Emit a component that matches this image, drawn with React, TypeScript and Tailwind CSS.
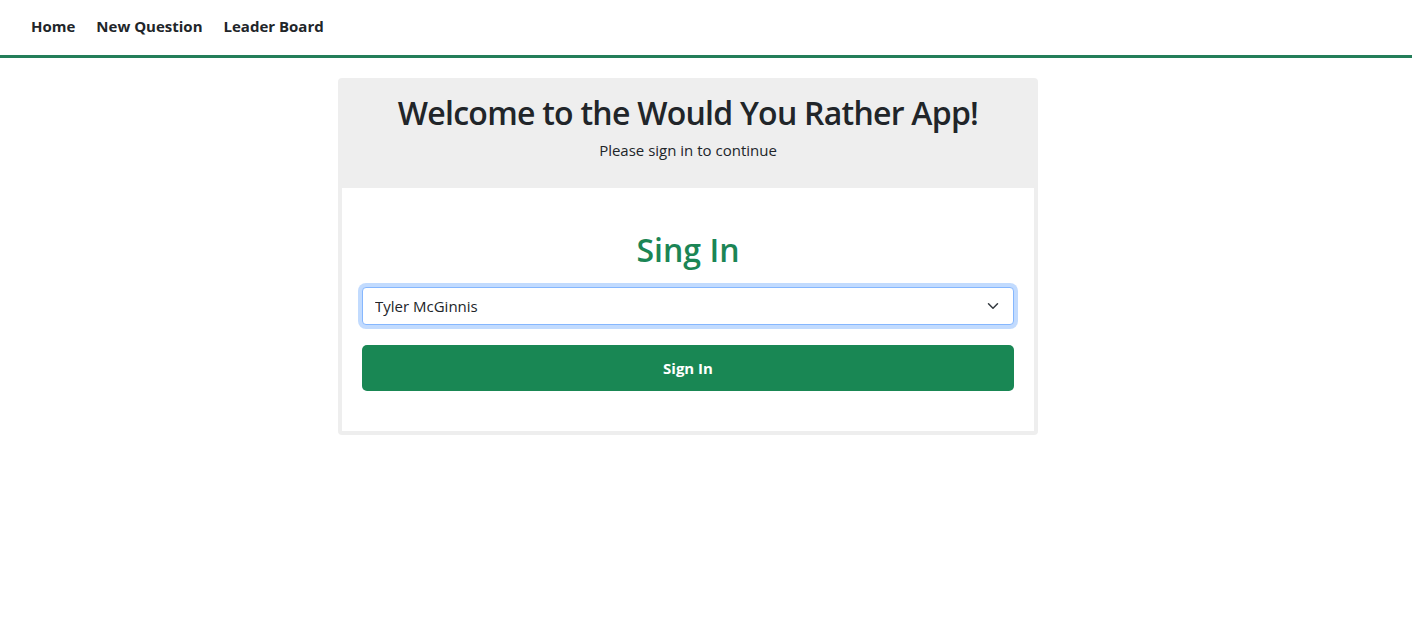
import React from "react";

const App = () => {
  return (
    <div className="min-h-screen bg-white text-[#212529] font-['Open_Sans',sans-serif]">
      <nav className="flex items-center h-[58px] pb-[3px] px-[31px] gap-[21px] border-b-[3px] border-[#237e59]">
        <a className="text-[15px] font-bold text-[#212529]">Home</a>
        <a className="text-[15px] font-bold text-[#212529]">New Question</a>
        <a className="text-[15px] font-bold text-[#212529]">Leader Board</a>
      </nav>
      <div className="flex justify-center pt-[20px] pr-[36px]">
        <div className="w-[700px] bg-[#eeeeee] rounded-[4px] px-[4px] pb-[4px]">
          <div className="flex flex-col items-center h-[110px] pt-[12px]">
            <h1 className="text-[32px] leading-[46px] font-semibold tracking-[-0.75px]">
              Welcome to the Would You Rather App!
            </h1>
            <p className="text-[15px] leading-[22px] mt-[3px]">Please sign in to continue</p>
          </div>
          <div className="bg-white px-[20px] pt-[40px] pb-[40px]">
            <h2 className="text-center text-[32px] leading-[44px] font-semibold text-[#1b8555]">
              Sing In
            </h2>
            <div className="relative mt-[15px]">
              <select
                defaultValue="tyler"
                className="w-full h-[38px] appearance-none rounded-[4px] border border-[#86b7fe] bg-white pl-[12px] text-[15px] text-[#212529] outline-none ring-4 ring-[#0d6efd]/25"
              >
                <option value="sarah">Sarah Edo</option>
                <option value="tyler">Tyler McGinnis</option>
                <option value="john">John Doe</option>
              </select>
              <svg
                className="absolute right-[15px] top-[13px] w-[12px] h-[12px] pointer-events-none"
                viewBox="0 0 16 16"
                fill="none"
                stroke="#343a40"
                strokeWidth="2"
                strokeLinecap="round"
                strokeLinejoin="round"
              >
                <path d="M2 5l6 6 6-6" />
              </svg>
            </div>
            <button className="mt-[20px] w-full h-[46px] rounded-[5px] bg-[#198754] text-white text-[15px] font-bold">
              Sign In
            </button>
          </div>
        </div>
      </div>
    </div>
  );
};

export default App;
